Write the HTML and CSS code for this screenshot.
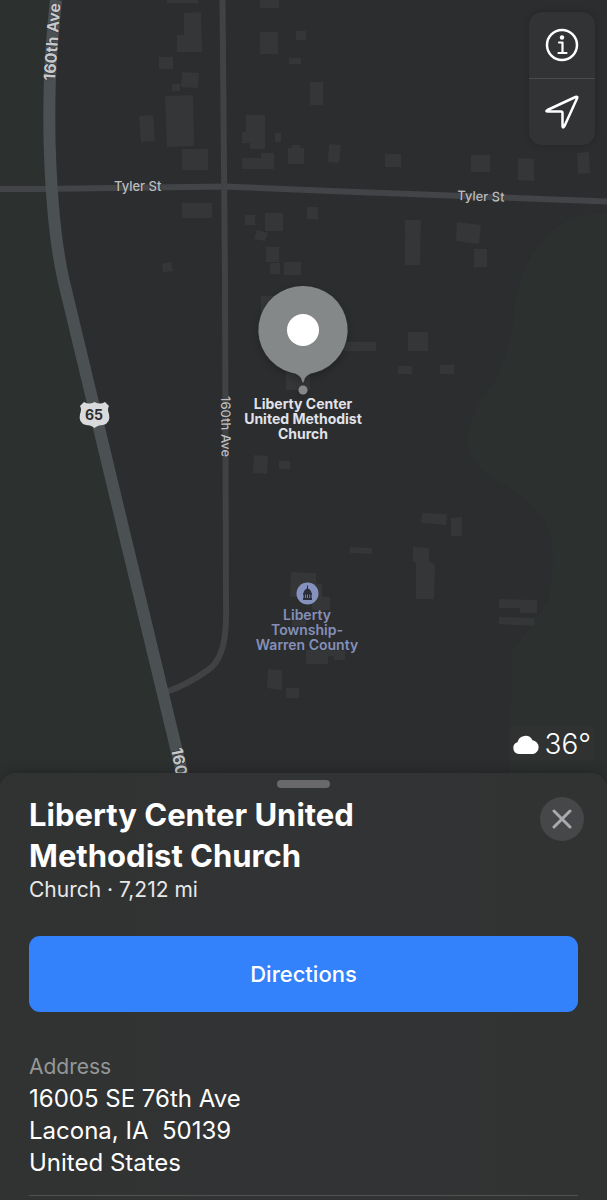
FILE: index.html
```html
<!DOCTYPE html>
<html lang="en">
<head>
<meta charset="utf-8">
<meta name="viewport" content="width=device-width, initial-scale=1">
<title>Liberty Center United Methodist Church</title>
<link rel="stylesheet" href="styles.css">
</head>
<body>
<main class="app">
  <section class="map" aria-label="Map">
    <svg class="map-canvas" viewBox="0 0 607 800" role="img" aria-label="Map of Liberty Center">
      <defs>
        <filter id="pin-shadow" x="-30%" y="-30%" width="160%" height="160%">
          <feDropShadow dx="0" dy="3" stdDeviation="4" flood-color="#000" flood-opacity=".25"/>
        </filter>
      </defs>
      <g class="land">
        <path d="M0 0H52L50 120Q50 190 64 280L93 400L188 800H0Z"/>
        <path d="M607 214Q570 212 548 235Q520 262 515 305Q512 345 496 380Q470 410 467 440Q470 465 495 480Q535 500 549 530Q556 560 548 600Q530 630 512 650L509 800H607Z"/>
      </g>
      <g class="buildings">
        <path d="M167 0H198V3H167ZM184 13L201 12L202 52H177V35H184ZM159 57H173V69H159ZM182 72L199 73L198 88L181 87ZM172 84H180V91H172ZM165 96L193 95L194 146L167 147ZM139 116L153 115L155 141L141 142ZM182 149H208V170H182ZM182 203H212V218H182ZM162 264L171 262L173 271L163 272Z"/>
        <path d="M260 0H279V8H260ZM260 32H278V54H260ZM296 31H306V40H296ZM289 58H301V64H289ZM310 82H323V105H310ZM246 115H265V149H250V143H242V132H246ZM275 133H281V142H275ZM242 158H261V153H274V169H242ZM288 148H292V145H300V148H304V164H288ZM329 144L341 145L339 163L328 162ZM385 154H401V167H385ZM471 155H490V172H471ZM518 158L534 159V181L518 180ZM577 153L589 152L590 173L578 174Z"/>
        <path d="M245 215H255V225H245ZM265 213H283V231H265ZM257 230L268 233L265 241L254 239ZM266 247H279V262H266ZM270 263H280V274H270ZM284 262H301V275H284ZM307 207H318V219H307ZM405 220H421L420 265H405V240L406 239L405 237ZM457 222L481 225L479 244L456 241ZM474 249H487V267H474ZM261 296H276V320H261ZM340 342H376V351H340ZM408 332H428V351H408ZM398 366H412V374H398ZM440 365H454V374H440ZM286 365H310V390H286Z"/>
        <path d="M254 455L268 456L267 474L253 473ZM279 461H290V469H279ZM422 513L447 514L446 525L421 523ZM451 518L462 517V536H451ZM350 547L372 548V554L350 553ZM413 547L429 548V561L435 565L434 599H416V562H413ZM291 572L316 573V584H322V597H330V610H312V597H290ZM499 599L537 600V613H520V608H499ZM499 617L535 618L534 626L499 624ZM306 650H345V660H334V656H328V664H306ZM268 669L282 670V690L267 688ZM286 688H299V698H286ZM292 615H306V626H292Z"/>
      </g>
      <g class="roads">
        <path class="road-minor" d="M0 189H40L224 186.500L330 191L450 195.500L607 201.500"/>
        <path class="road-minor road-avenue" d="M222.500 0L225 280L226 600Q227 637 221 652Q217 664 208 670Q187 685 166 692"/>
        <path class="road-highway" d="M56 0C49 65 49 100 49.500 140C51 195 55 242 63.500 280L75.500 330L123.500 530L185 785"/>
      </g>
      <g class="halo">
        <text class="road-label" x="114" y="191">Tyler St</text>
        <text class="road-label" x="457" y="200" transform="rotate(2 457 200)">Tyler St</text>
        <text class="road-label" transform="translate(221 396) rotate(89.500)">160th Ave</text>
        <text class="highway-label" transform="translate(55 81) rotate(-86)">160th Ave</text>
        <text class="highway-label" transform="translate(171 749) rotate(79)">160</text>
      </g>
      <path class="shield" d="M84 402Q89 405 94.500 402Q100 405 105 402L109 406Q107 409 109 414Q111 423 103 425Q98 425 94.500 428Q91 425 86 425Q78 423 80 414Q82 409 80 406Z"/>
      <text class="shield-label" x="94" y="420">65</text>
      <g class="church-pin" filter="url(#pin-shadow)">
        <path d="M303 286A44 44 0 0 1 315 372.500Q305 374 304 381Q303 384 302 381Q301 374 291 372.500A44 44 0 0 1 303 286Z"/>
        <circle cx="303" cy="390" r="4.500"/>
      </g>
      <circle class="pin-center" cx="303" cy="330" r="16"/>
      <text class="place-label church-label" x="303" y="409"><tspan x="303">Liberty Center</tspan><tspan x="303" dy="15">United Methodist</tspan><tspan x="303" dy="15">Church</tspan></text>
      <circle class="town-pin" cx="307.500" cy="593.500" r="11"/>
      <path class="town-icon" d="M307 585.500H308V588.500Q311 589.500 311.500 593H312V594.500H303V593H303.500Q304 589.500 307 588.500ZM303.500 594.500H305V598H303.500ZM305.800 594.500H307.200V598H305.800ZM308 594.500H309.400V598H308ZM310.200 594.500H311.600V598H310.200ZM303 598H312V600H303Z"/>
      <text class="place-label town-label" x="307" y="620"><tspan x="307">Liberty</tspan><tspan x="307" dy="15">Township-</tspan><tspan x="307" dy="15">Warren County</tspan></text>
    </svg>
    <div class="map-controls">
      <button class="map-button" type="button" aria-label="Map information">
        <svg width="34" height="34" viewBox="0 0 34 34" aria-hidden="true">
          <circle class="stroke" cx="17" cy="17" r="15"/>
          <circle class="fill" cx="17" cy="9.500" r="2.200"/>
          <path class="stroke thin" d="M14 14.500H17.500V25M13.500 25H21.500"/>
        </svg>
      </button>
      <button class="map-button" type="button" aria-label="My location">
        <svg width="34" height="34" viewBox="0 0 34 34" aria-hidden="true">
          <path class="stroke" d="M30.500 2Q33 1 32 3.500L19.500 31Q17.500 34 17.500 31V18Q17.500 16.500 16 16.500H3Q0 16.500 2.500 15Z"/>
        </svg>
      </button>
    </div>
    <div class="weather">
      <svg width="27" height="20" viewBox="0 0 27 20" aria-hidden="true">
        <path d="M6 20A6 6 0 0 1 4.500 8.300A8 8 0 0 1 19.500 6.200A7 7 0 0 1 20 20Z"/>
      </svg>
      <span>36°</span>
    </div>
  </section>
  <section class="sheet" aria-labelledby="place-name">
    <div class="grabber"></div>
    <header class="sheet-header">
      <div class="heading">
        <h1 id="place-name">Liberty Center United Methodist Church</h1>
        <p class="summary">Church · 7,212 mi</p>
      </div>
      <button class="close" type="button" aria-label="Close">
        <svg width="20" height="20" viewBox="0 0 20 20" aria-hidden="true"><path d="M2 2L18 18M18 2L2 18"/></svg>
      </button>
    </header>
    <button class="directions" type="button">Directions</button>
    <div class="address">
      <h2>Address</h2>
      <address>16005 SE 76th Ave<br>Lacona, IA&nbsp; 50139<br>United States</address>
    </div>
  </section>
</main>
</body>
</html>
```
FILE: styles.css
```css
* { box-sizing: border-box; }

body {
  margin: 0;
  background: #313332;
  color: #fff;
  font-family: Inter, "Liberation Sans", sans-serif;
}

button {
  border: 0;
  padding: 0;
  color: inherit;
  font: inherit;
  cursor: pointer;
}

h1, h2, p { margin: 0; }

.app {
  display: flex;
  flex-direction: column;
  min-height: 100vh;
}

/* Map */
.map {
  position: relative;
  background: #2c2d2f;
}

.map-canvas {
  display: block;
  width: 100%;
}

.land { fill: #2c302f; }
.buildings { fill: #353638; }
.roads { fill: none; }
.road-minor { stroke: #424447; stroke-width: 6; }
.road-avenue { stroke: #404244; }
.road-highway { stroke: #4b5053; stroke-width: 12; }

.halo text {
  stroke: #2c2d2f;
  stroke-width: 1;
  paint-order: stroke;
}

.road-label { fill: #bcbdbf; font-size: 13px; font-weight: 500; }
.highway-label { fill: #c6c8ca; font-size: 16px; font-weight: 700; }

.shield { fill: #d9dadb; }
.shield-label {
  fill: #2c2d2f;
  font-size: 14px;
  font-weight: 700;
  text-anchor: middle;
}

.church-pin { fill: #858889; }
.pin-center { fill: #fff; }

.place-label {
  font-size: 14px;
  font-weight: 600;
  text-anchor: middle;
  stroke: #2c2d2f;
  stroke-width: 1;
  paint-order: stroke;
}

.church-label { fill: #e1e2ea; font-weight: 700; }
.town-label { fill: #8490b8; }
.town-pin { fill: #8492bd; }
.town-icon { fill: #292d3a; }

.map-controls {
  position: absolute;
  top: 12px;
  right: 12px;
  display: flex;
  flex-direction: column;
  width: 66px;
  overflow: hidden;
  border-radius: 13px;
  background: #323335;
  box-shadow: 0 0 6px rgb(0 0 0 / 20%);
}

.map-button {
  display: grid;
  place-items: center;
  height: 66px;
  background: transparent;
}

.map-button + .map-button {
  height: 67px;
  border-top: 1px solid #4b4c4e;
}

.stroke {
  fill: none;
  stroke: #fff;
  stroke-width: 2.500;
  stroke-linecap: round;
  stroke-linejoin: round;
}

.thin { stroke-width: 2.200; }
.fill { fill: #fff; }

.weather {
  position: absolute;
  right: 12px;
  bottom: 38px;
  display: flex;
  align-items: center;
  gap: 4px;
  padding: 0 4px;
  border-radius: 6px;
  background: #303231;
  font-size: 28px;
  font-weight: 300;
  line-height: 36px;
}

.weather svg { fill: #fff; }

/* Place card */
.sheet {
  position: relative;
  flex: 1;
  margin-top: -27px;
  padding: 7px 29px 0;
  border-radius: 16px 16px 0 0;
  background: linear-gradient(90deg, #313332, #323335 55%, #313332);
  box-shadow: 0 -2px 12px rgb(0 0 0 / 20%);
}

.grabber {
  width: 53px;
  height: 8px;
  margin: 0 auto 6px;
  border-radius: 4px;
  background: #69696b;
}

.sheet-header {
  display: flex;
  justify-content: space-between;
}

.heading { max-width: 400px; }

h1 {
  font-size: 31px;
  font-weight: 700;
  line-height: 41px;
}

.summary {
  color: #e8e8e8;
  font-size: 21px;
  line-height: 28px;
}

.close {
  display: grid;
  flex: none;
  place-items: center;
  width: 44px;
  height: 44px;
  margin: 3px -6px 0 0;
  border-radius: 50%;
  background: #464749;
}

.close path {
  stroke: #a9a9ae;
  stroke-width: 3;
  stroke-linecap: round;
}

.directions {
  width: 100%;
  height: 76px;
  margin-top: 32px;
  border-radius: 11px;
  background: #3381fb;
  font-size: 22px;
  font-weight: 500;
}

.address {
  margin-top: 39px;
  padding-bottom: 16px;
  border-bottom: 1px solid #505251;
}

h2 {
  color: #969797;
  font-size: 21px;
  font-weight: 400;
  line-height: 32px;
}

address {
  font-size: 24px;
  font-style: normal;
  line-height: 32px;
}
```
